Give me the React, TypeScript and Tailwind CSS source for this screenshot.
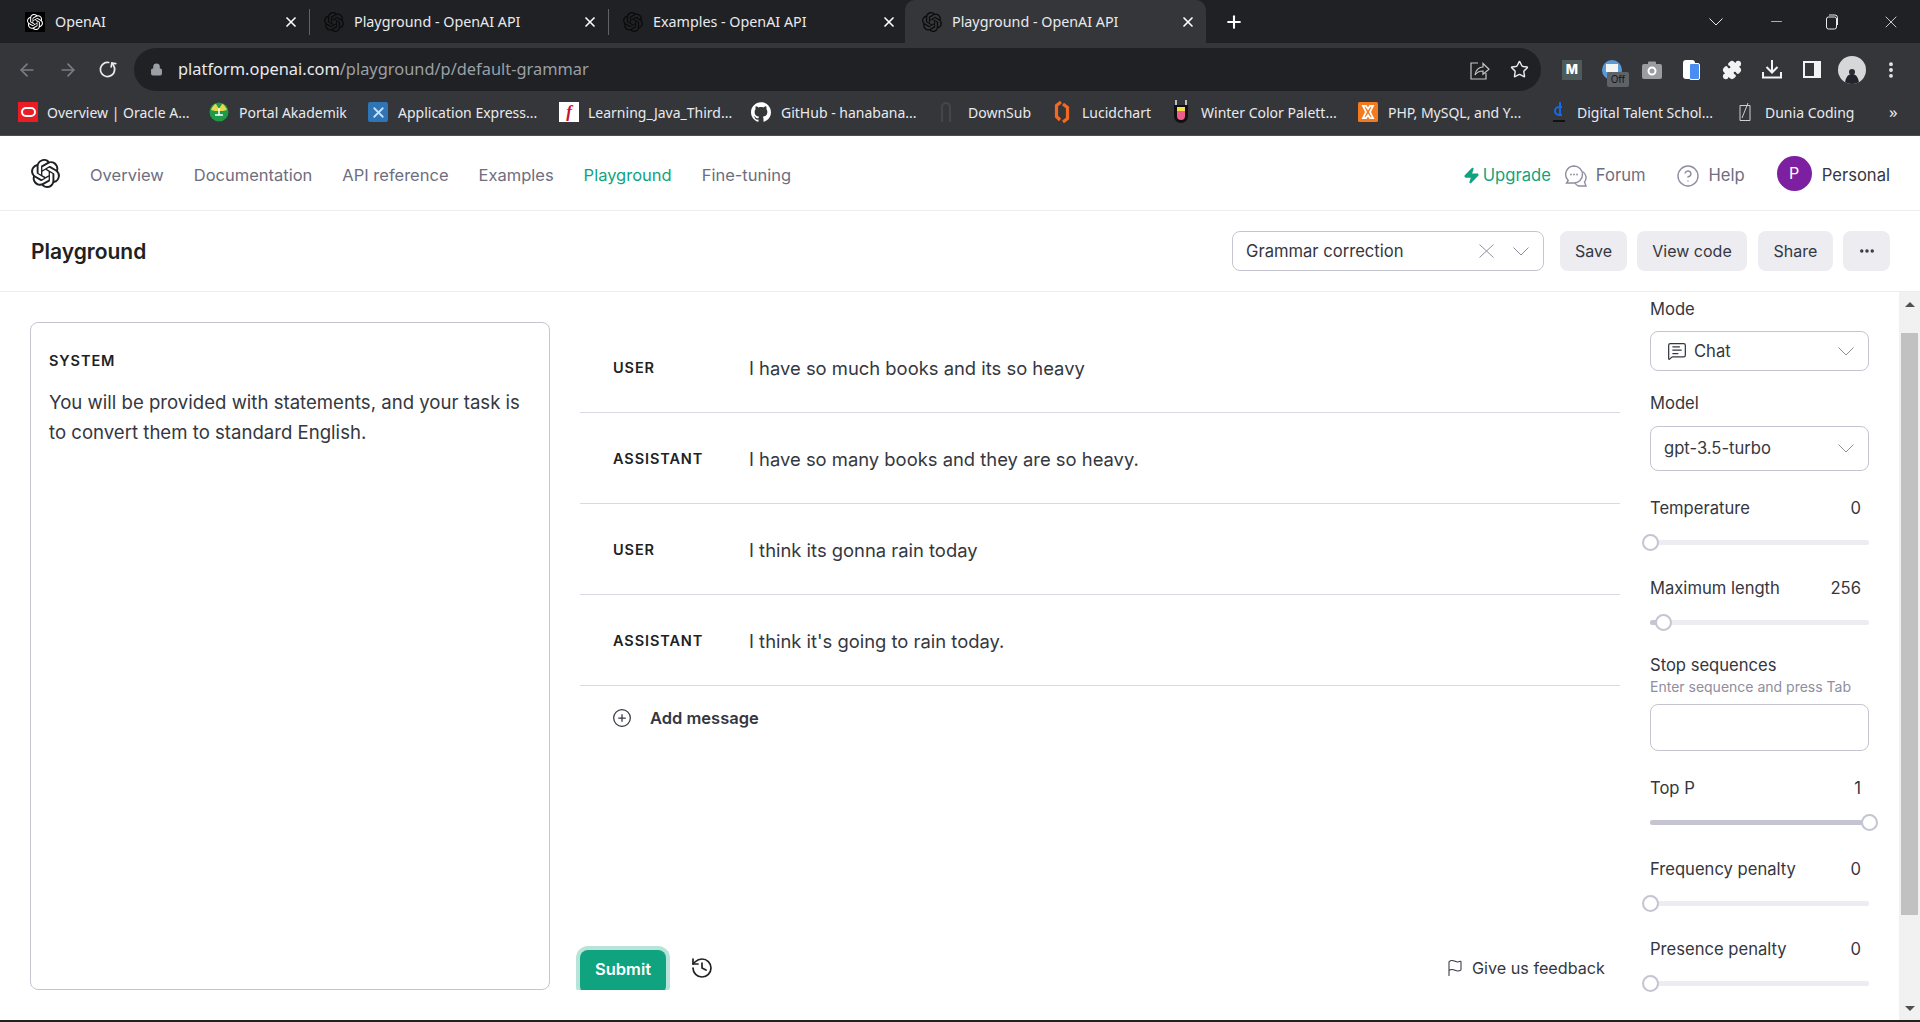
import { ArrowLeft, ArrowRight, CirclePlus, CircleHelp, Ellipsis, Flag, History, Lock, Plus, RotateCw, Star, X, Zap, Puzzle, Minus, MessageSquareText } from 'lucide-react';
import { SiOpenai, SiGithub } from 'react-icons/si';
import type { ReactNode } from 'react';

function Chevron({ className = '' }: { className?: string }) {
  return (
    <svg width="16" height="9" viewBox="0 0 16 9" fill="none" stroke="#8e8ea0" strokeWidth="1" className={className}>
      <path d="M.5.5 8 8 15.5.5" />
    </svg>
  );
}

function Tab({ title, first, active }: { title: string; first?: boolean; active?: boolean }) {
  return (
    <div className={`h-[43px] flex items-center pr-[10px] ${active ? 'w-[301px] -ml-[2px] pl-[17px] bg-[#35363a] rounded-t-[10px]' : 'w-[299px] pl-[15px]'}`}>
      <span className={`w-5 h-5 flex items-center justify-center shrink-0 ${first ? 'bg-black text-white' : 'text-[#0b0b0c]'}`}>
        <SiOpenai size={first ? 16 : 20} />
      </span>
      <span className="ml-[10px] text-[14.3px] text-[#e8eaed] flex-1 truncate">{title}</span>
      <X size={16} strokeWidth={2.5} className="text-white" />
    </div>
  );
}

function Bookmark({ icon, label, textWidth, gap = 'ml-[9px]', left }: { icon: ReactNode; label: string; textWidth: string; gap?: string; left: string }) {
  return (
    <div className={`flex items-center ${left}`}>
      <span className="w-5 h-5 flex items-center justify-center shrink-0">{icon}</span>
      <span className={`${gap} ${textWidth} text-[14px] text-[#e8eaed] whitespace-nowrap`}>{label}</span>
    </div>
  );
}

function Slider({ label, value, pct, className = '' }: { label: string; value: string; pct: number; className?: string }) {
  return (
    <div className={className}>
      <div className="flex justify-between items-center h-5 pr-2 text-[16.6px] text-[#353740]">
        <span>{label}</span>
        <span>{value}</span>
      </div>
      <div className="relative h-[5px] mt-[22px] rounded-full bg-[#ececf1]">
        <div className="h-full rounded-full bg-[#c5c5d2]" style={{ width: `${pct}%` }} />
        <div
          className="absolute top-[-6px] w-[17px] h-[17px] -ml-[8px] rounded-full bg-white border-2 border-[#c5c5d2]"
          style={{ left: `${pct}%` }}
        />
      </div>
    </div>
  );
}

function Message({ role, text }: { role: string; text: string }) {
  return (
    <div className="h-[91px] flex items-center border-b border-[#d9d9e3] pl-[33px]">
      <span className="w-[136px] pt-[2px] text-[14.5px] font-semibold tracking-[0.9px] text-[#202123]">{role}</span>
      <span className="pt-[4px] text-[18.4px] text-[#353740]">{text}</span>
    </div>
  );
}

function FieldBox({ children, className = '' }: { children?: ReactNode; className?: string }) {
  return (
    <div className={`flex items-center border border-[#c5c5d2] rounded-[8px] bg-white ${className}`}>{children}</div>
  );
}

export default function App() {
  return (
    <div className="w-[1920px] h-[1022px] flex flex-col overflow-hidden bg-white font-['Inter',sans-serif] border-b-2 border-[#202124]">
      {/* Browser chrome */}
      <div className="bg-[#202124] h-[43px] flex items-center pl-[10px] font-['Noto_Sans',sans-serif]">
        <Tab title="OpenAI" first />
        <div className="w-px h-[26px] bg-[#5f6368] -mr-px" />
        <Tab title="Playground - OpenAI API" />
        <div className="w-px h-[26px] bg-[#5f6368] -mr-px" />
        <Tab title="Examples - OpenAI API" />
        <Tab title="Playground - OpenAI API" active />
        <Plus size={20} strokeWidth={2.5} className="text-white ml-[18px]" />
        <div className="ml-auto flex items-center text-[#e8eaed]">
          <svg width="14" height="8" viewBox="0 0 14 8" fill="none" stroke="currentColor" className="mr-[45px]">
            <path d="M.5.5 7 7 13.5.5" />
          </svg>
          <Minus size={17} strokeWidth={1} className="mr-[40px]" />
          <svg width="14" height="16" viewBox="0 0 14 16" fill="none" stroke="currentColor" className="mr-[42px]">
            <rect x="1.5" y="3" width="10" height="12" rx="2" />
            <path d="M4 1h6a2.5 2.5 0 0 1 2.5 2.5V11" />
          </svg>
          <X size={20} strokeWidth={1} className="mr-[19px]" />
        </div>
      </div>

      <div className="bg-[#35363a] h-[48px] pt-[5px] flex items-center">
        <ArrowLeft size={20} className="text-[#7a7d82] ml-[17px]" />
        <ArrowRight size={20} className="text-[#7a7d82] ml-[21px]" />
        <RotateCw size={19} strokeWidth={2.2} className="text-[#e8eaed] ml-[20px] -scale-x-100 rotate-[100deg]" />
        <div className="ml-[17px] w-[1407px] h-[43px] rounded-full bg-[#202124] flex items-center pl-[16px] pr-[12px]">
          <Lock size={13} className="text-[#9aa0a6] fill-[#9aa0a6]" />
          <span className="ml-[15px] text-[16.4px] font-['Noto_Sans',sans-serif] text-[#e8eaed]">
            platform.openai.com<span className="text-[#9aa0a6]">/playground/p/default-grammar</span>
          </span>
          <svg width="20" height="21" viewBox="0 0 20 21" fill="none" stroke="#c4c7c5" strokeWidth="1.2" className="ml-auto">
            <path d="M8 4H1v16h15v-6" />
            <path d="M5 16c.5-5 4-8 8-8V4.5l6 5.8-6 5V12c-3 0-6 1-8 4Z" />
          </svg>
          <Star size={19} strokeWidth={1.8} className="ml-[20px] text-[#e8eaed]" />
        </div>
        <span className="ml-[21px] w-5 h-5 bg-[#4f5b5b] flex items-center justify-center text-[13px] font-extrabold text-white">M</span>
        <span className="relative ml-[20px] w-5 h-5 rounded-full bg-[#5b9bd5] flex items-start justify-center pt-[4px]">
          <span className="w-[12px] h-[8px] bg-[#f1f3f4]" />
          <span className="absolute left-[5px] top-[12px] w-[22px] h-[15px] rounded-[2px] bg-[#5f6368] text-[10px] leading-[15px] text-center text-[#141414]">Off</span>
        </span>
        <svg width="20" height="18" viewBox="0 0 20 18" className="ml-[20px]">
          <path d="M6 3V1.5A1 1 0 0 1 7 .5h6a1 1 0 0 1 1 1V3h4a2 2 0 0 1 2 2v11a2 2 0 0 1-2 2H2a2 2 0 0 1-2-2V5a2 2 0 0 1 2-2Z" fill="#9a9c9f" />
          <circle cx="10" cy="10" r="3.5" fill="none" stroke="#fff" strokeWidth="2" />
        </svg>
        <span className="relative ml-[21px] w-[17px] h-[20px]">
          <span className="absolute left-0 top-0 w-[12px] h-[19px] rounded-[3px] bg-white" />
          <span className="absolute right-0 top-[3px] w-[11px] h-[17px] rounded-[2px] bg-[#4a8df0] border border-white" />
        </span>
        <Puzzle size={20} className="ml-[22px] text-[#f1f3f4] fill-[#f1f3f4]" />
        <svg width="20" height="19" viewBox="0 0 20 19" fill="none" stroke="#f1f3f4" strokeWidth="2" className="ml-[20px]">
          <path d="M10 0v12M4.5 7 10 12.5 15.5 7M1 12v5.5h18V12" />
        </svg>
        <span className="ml-[21px] w-[18px] h-[17px] border-2 border-[#f1f3f4] border-r-[7px]" />
        <svg width="28" height="28" viewBox="0 0 28 28" className="ml-[17px]">
          <clipPath id="avatar-clip"><circle cx="14" cy="14" r="14" /></clipPath>
          <g clipPath="url(#avatar-clip)">
            <rect width="28" height="28" fill="#d6d7d8" />
            <circle cx="14" cy="16" r="3" fill="#2b2b33" />
            <path d="M7 28c0-6 3-10 7-10s7 4 7 10Z" fill="#24242c" />
          </g>
        </svg>
        <Ellipsis size={20} strokeWidth={2.6} className="ml-[15px] rotate-90 text-[#e8eaed]" />
      </div>

      <div className="bg-[#35363a] h-[45px] pb-[2px] flex items-center pl-[18px] font-['Noto_Sans',sans-serif] border-b border-[#4d4e52]">
        <Bookmark left="" textWidth="w-[141px]" label="Overview | Oracle A..." icon={<span className="w-5 h-5 bg-[#ec1c24] flex items-center justify-center"><span className="w-[15px] h-[10px] rounded-full border-2 border-white" /></span>} />
        <Bookmark left="ml-[21px]" gap="ml-[10px]" textWidth="w-[107px]" label="Portal Akademik" icon={
          <svg width="20" height="20" viewBox="0 0 20 20">
            <circle cx="10" cy="10" r="9.5" fill="#1f9a46" />
            <path d="M2 8c2-5 4-6 5-6l3 5 3-5c1 0 3 1 5 6-3 1-5 1-8 1s-5 0-8-1Z" fill="#e8d84a" />
            <path d="M10 6v7M6 13h8" stroke="#fff" strokeWidth="1.5" />
          </svg>
        } />
        <Bookmark left="ml-[22px]" gap="ml-[10px]" textWidth="w-[140px]" label="Application Express..." icon={<span className="w-5 h-5 rounded-[2px] bg-[#2f74b5] flex items-center justify-center"><X size={17} strokeWidth={2.5} className="text-[#c9e2f7]" /></span>} />
        <Bookmark left="ml-[21px]" textWidth="w-[143px]" label="Learning_Java_Third..." icon={<span className="w-5 h-5 bg-white flex items-center justify-center font-['Liberation_Serif',serif] italic font-bold text-[17px] text-[#c8102e]">f</span>} />
        <Bookmark left="ml-[20px]" gap="ml-[10px]" textWidth="w-[137px]" label="GitHub - hanabana..." icon={<SiGithub size={20} className="text-white" />} />
        <Bookmark left="ml-[18px]" gap="ml-[12px]" textWidth="w-[64px]" label="DownSub" icon={<span className="w-[10px] h-5 rounded-t-[5px] border-2 border-b-0 border-[#45464a]" />} />
        <Bookmark left="ml-[20px]" gap="ml-[10px]" textWidth="w-[68px]" label="Lucidchart" icon={<svg width="16" height="24" viewBox="0 0 16 24" fill="none" stroke="#f26a21" strokeWidth="3.2"><path d="M7 2 2.5 5.500v11L6 20M9 4l4.500 3.500v11L9 22" /></svg>} />
        <Bookmark left="ml-[21px]" gap="ml-[10px]" textWidth="w-[137px]" label="Winter Color Palett..." icon={
          <svg width="18" height="24" viewBox="0 0 18 24">
            <path d="M4 0v5M14 0v5" stroke="#e8eaed" strokeWidth="1.5" />
            <path d="M2 5h14v11a7 7 0 0 1-14 0Z" fill="#111" />
            <path d="M5 7h8v4H5Z" fill="#f6e04a" />
            <path d="M5 11h8v5a4 4 0 0 1-8 0Z" fill="#ef5b8c" />
          </svg>
        } />
        <Bookmark left="ml-[20px]" gap="ml-[10px]" textWidth="w-[137px]" label="PHP, MySQL, and Y..." icon={
          <svg width="20" height="20" viewBox="0 0 20 20">
            <rect width="20" height="20" rx="1.5" fill="#f37a1f" />
            <path d="M5 4h3l2 3 2-3h3l-3 6 3 6h-3l-2-3-2 3H5l3-6Z" fill="none" stroke="#fff" strokeWidth="1.8" />
          </svg>
        } />
        <Bookmark left="ml-[24px]" gap="ml-[8px]" textWidth="w-[137px]" label="Digital Talent Schol..." icon={
          <svg width="16" height="22" viewBox="0 0 16 22" fill="none">
            <path d="M9 1v14M11 6H8a3.500 3.500 0 0 0 0 8h3" stroke="#1668e3" strokeWidth="2" />
            <path d="M2 20h12" stroke="#111" strokeWidth="2" />
          </svg>
        } />
        <Bookmark left="ml-[21px]" gap="ml-[10px]" textWidth="w-[90px]" label="Dunia Coding" icon={
          <svg width="12" height="20" viewBox="0 0 12 20" fill="none" stroke="#d0d0d0">
            <path d="M1 3.500h10v15H1ZM3 16 9 1" />
          </svg>
        } />
        <span className="ml-[34px] text-[17px] text-[#e8eaed]">»</span>
      </div>

      {/* Site header */}
      <header className="h-[75px] flex items-center border-b border-[#ececf1] pl-[31px] pr-[30px]">
        <SiOpenai size={29} className="text-[#202123]" />
        <nav className="ml-[30px] pt-[4px] flex gap-[30px] text-[16.5px] text-[#6e6e80]">
          <span>Overview</span>
          <span>Documentation</span>
          <span>API reference</span>
          <span>Examples</span>
          <span className="text-[#10a37f]">Playground</span>
          <span>Fine-tuning</span>
        </nav>
        <div className="ml-auto pt-[5px] flex items-center text-[16.6px] text-[#6e6e80]">
          <Zap size={17} className="text-[#10a37f] fill-[#10a37f]" />
          <span className="ml-[3px] text-[#10a37f]">Upgrade</span>
          <svg width="23" height="22" viewBox="0 0 23 22" fill="none" stroke="#8e8ea0" strokeWidth="1.4" className="ml-[13px]">
            <path d="M10 1a8.500 8.500 0 0 1 0 17H2.500l1.700-2.500A8.500 8.500 0 0 1 10 1Z" />
            <path d="M18.500 6.500a7 7 0 0 1 2 10.500l1.500 4h-7.500a7 7 0 0 1-3.500-3" />
            <path d="M7 9.500h.01M10 9.500h.01M13 9.500h.01" strokeWidth="1.800" strokeLinecap="round" />
          </svg>
          <span className="ml-[9px]">Forum</span>
          <CircleHelp size={24} strokeWidth={1.4} className="ml-[30px] text-[#8e8ea0]" />
          <span className="ml-[9px]">Help</span>
          <span className="ml-[32px] -mt-[5px] w-[35px] h-[35px] rounded-full bg-[#7c1fa0] flex items-center justify-center text-white text-[16px]">P</span>
          <span className="ml-[10px] text-[#353740]">Personal</span>
        </div>
      </header>

      {/* Playground header */}
      <div className="h-[81px] flex items-center border-b border-[#ececf1] pl-[31px] pr-[30px]">
        <h1 className="text-[21px] font-semibold text-[#202123] translate-y-px">Playground</h1>
        <div className="ml-auto flex items-center text-[16px] text-[#353740]">
          <FieldBox className="w-[312px] h-[40px] pl-[13px] pr-[14px]">
            <span className="flex-1 pt-px text-[16.6px]">Grammar correction</span>
            <svg width="15" height="14" viewBox="0 0 15 14" fill="none" stroke="#8e8ea0">
              <path d="m.5.5 14 13M14.500.5l-14 13" />
            </svg>
            <Chevron className="ml-[19px]" />
          </FieldBox>
          <span className="ml-[16px] w-[67px] h-[40px] rounded-[8px] bg-[#ececf1] flex items-center justify-center">Save</span>
          <span className="ml-[10px] w-[110px] h-[40px] rounded-[8px] bg-[#ececf1] flex items-center justify-center">View code</span>
          <span className="ml-[11px] w-[75px] h-[40px] rounded-[8px] bg-[#ececf1] flex items-center justify-center">Share</span>
          <span className="ml-[10px] w-[47px] h-[40px] rounded-[8px] bg-[#ececf1] flex items-center justify-center">
            <Ellipsis size={18} strokeWidth={2.6} />
          </span>
        </div>
      </div>

      {/* Main */}
      <div className="flex-1 min-h-0 flex">
        <div className="pl-[30px] pt-[30px] pb-[30px]">
          <div className="w-[520px] h-full border border-[#c5c5d2] rounded-[8px] px-[18px] pt-[27px]">
            <div className="text-[14.500px] font-semibold tracking-[0.9px] text-[#202123]">SYSTEM</div>
            <p className="mt-[15px] text-[18.6px] leading-[30px] text-[#353740]">
              You will be provided with statements, and your task is to convert them to standard English.
            </p>
          </div>
        </div>

        <div className="ml-[30px] w-[1040px] flex flex-col pb-[30px]">
          <div className="mt-[30px]">
            <Message role="USER" text="I have so much books and its so heavy" />
            <Message role="ASSISTANT" text="I have so many books and they are so heavy." />
            <Message role="USER" text="I think its gonna rain today" />
            <Message role="ASSISTANT" text="I think it's going to rain today." />
          </div>
          <div className="mt-[20px] pl-[32px] flex items-center text-[16.5px] font-semibold text-[#353740]">
            <CirclePlus size={20} strokeWidth={1.5} />
            <span className="ml-[18px]">Add message</span>
          </div>
          <div className="mt-auto flex items-center">
            <div className="-ml-[4px] pl-[4px] pr-[4px] pt-[4px] h-[44px] overflow-hidden">
              <span className="w-[86px] h-[44px] rounded-[8px] bg-[#10a37f] ring-4 ring-[#b7e3d8] flex items-center justify-center pb-[5px] text-white font-semibold text-[16.5px]">Submit</span>
            </div>
            <History size={24} strokeWidth={1.7} className="ml-[20px] text-[#202123]" />
            <div className="ml-auto mr-[15px] flex items-center text-[16.2px] text-[#353740]">
              <Flag size={18} strokeWidth={1.4} />
              <span className="ml-[8px]">Give us feedback</span>
            </div>
          </div>
        </div>

        <div className="ml-[30px] w-[219px] pt-[7px]">
          <div className="h-5 text-[16.6px] leading-5 text-[#353740]">Mode</div>
          <FieldBox className="mt-[12px] h-[40px] pl-[16px] pr-[14px] text-[16.6px] text-[#353740]">
            <MessageSquareText size={20} strokeWidth={1.5} />
            <span className="ml-[7px] flex-1">Chat</span>
            <Chevron />
          </FieldBox>
          <div className="mt-[22px] h-5 text-[16.6px] leading-5 text-[#353740]">Model</div>
          <FieldBox className="mt-[13px] h-[45px] pl-[13px] pr-[14px] text-[16.6px] text-[#353740]">
            <span className="flex-1">gpt-3.5-turbo</span>
            <Chevron />
          </FieldBox>
          <Slider className="mt-[27px]" label="Temperature" value="0" pct={0} />
          <Slider className="mt-[33px]" label="Maximum length" value="256" pct={6} />
          <div className="mt-[30px] h-5 text-[16.6px] leading-5 text-[#353740]">Stop sequences</div>
          <div className="mt-[2px] text-[14px] leading-5 text-[#8e8ea0]">Enter sequence and press Tab</div>
          <FieldBox className="mt-[7px] h-[47px]" />
          <Slider className="mt-[27px]" label="Top P" value="1" pct={100} />
          <Slider className="mt-[34px]" label="Frequency penalty" value="0" pct={0} />
          <Slider className="mt-[33px]" label="Presence penalty" value="0" pct={0} />
        </div>

        {/* Scrollbar */}
        <div className="ml-[30px] w-[21px] bg-[#f1f1f1] flex flex-col items-center">
          <div className="mt-[10px] w-0 h-0 border-x-[5px] border-x-transparent border-b-[5px] border-b-[#505050]" />
          <div className="mt-[26px] w-[17px] h-[582px] bg-[#c1c1c1]" />
          <div className="mt-auto mb-[9px] w-0 h-0 border-x-[5px] border-x-transparent border-t-[5px] border-t-[#505050]" />
        </div>
      </div>
    </div>
  );
}
